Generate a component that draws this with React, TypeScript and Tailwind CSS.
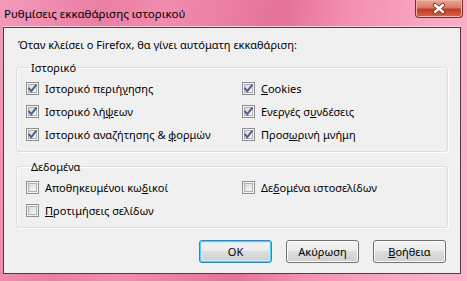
import type {ReactNode} from 'react';

// Win7-style "clear history" settings dialog

const FONT = {fontFamily: '"Noto Sans", "Open Sans", sans-serif'};

function CheckBox({checked}: {checked: boolean}) {
  return (
    <span className="relative flex h-[13px] w-[13px] shrink-0 items-center justify-center border border-[#8e8f8f] bg-[#f4f4f4]">
      <span className="absolute inset-[1px] border border-[#aeb0b2] bg-gradient-to-br from-[#d8d8d8] to-[#fafafa]" />
      {checked && (
        <svg viewBox="0 0 11 11" className="relative h-[11px] w-[11px]">
          <path
            d="M2.2 5.6 L4.3 8.2 L8.8 2.4"
            fill="none"
            stroke="#4c5d92"
            strokeWidth="1.9"
            strokeLinecap="square"
          />
        </svg>
      )}
    </span>
  );
}

function Option({checked, children}: {checked: boolean; children: ReactNode}) {
  return (
    <label className="flex h-[23px] items-center gap-[6px] text-[11px] leading-[15px] text-black">
      <CheckBox checked={checked} />
      <span>{children}</span>
    </label>
  );
}

function Group({title, children}: {title: string; children: ReactNode}) {
  return (
    <fieldset className="mx-[12px] rounded-[3px] border border-[#d5dfe5] pl-[9px] shadow-[inset_1px_1px_0_#fff,1px_1px_0_#fff]">
      <legend className="ml-[4px] px-[1px] text-[11px] leading-[15px] text-black">{title}</legend>
      <div className="grid grid-cols-[216px_1fr] pt-[2px] pb-[5px]">{children}</div>
    </fieldset>
  );
}

function Button({children, primary}: {children: ReactNode; primary?: boolean}) {
  return (
    <button
      type="button"
      className={`flex h-[23px] w-[73px] items-center justify-center rounded-[3px] border bg-[linear-gradient(#f2f2f2,#ebebeb_50%,#dddddd_50%,#cfcfcf)] text-[11px] leading-[15px] text-black ${
        primary
          ? 'border-[#3c7fb1] shadow-[inset_0_0_0_1px_#48d4fb,inset_0_0_0_2px_#c6effc]'
          : 'border-[#707070] shadow-[inset_0_0_0_1px_#fcfcfc]'
      }`}
    >
      {children}
    </button>
  );
}

export default function App() {
  return (
    <div
      style={FONT}
      className="relative flex h-[281px] w-[467px] flex-col overflow-hidden bg-[linear-gradient(100deg,#f39abb_0%,#ea7ea2_20%,#f28cae_32%,#e4729a_55%,#f48fb2_68%,#f9a8c3_85%,#fbb5cc_100%)]"
    >
      {/* Title bar */}
      <div className="flex h-[27px] shrink-0 items-center pl-[4px] text-[11.5px] text-black">
        Ρυθμίσεις εκκαθάρισης ιστορικού
      </div>
      <div
        aria-label="close"
        className="absolute top-0 left-[415px] flex h-[18px] w-[48px] items-center justify-center rounded-b-[4px] border border-t-0 border-[#7c2d25] bg-[linear-gradient(#eaa592,#d87a64_45%,#c13d26_55%,#d6644a)] shadow-[inset_0_0_0_1px_#f3b3a4]"
      >
        <svg viewBox="0 0 14 11" className="h-[11px] w-[14px]">
          <path d="M3 2 L11 9 M11 2 L3 9" stroke="#6e2a22" strokeWidth="4" strokeLinecap="round" />
          <path d="M3 2 L11 9 M11 2 L3 9" stroke="#fff" strokeWidth="2.4" strokeLinecap="round" />
        </svg>
      </div>

      {/* Client area */}
      <div className="ml-[3px] flex h-[247px] w-[458px] flex-col border border-[#5e3446] bg-[#f0f0f0] shadow-[0_-1px_0_#ffd3e2]">
        <p className="pt-[9px] pl-[14px] text-[11px] leading-[15px] text-black">
          Όταν κλείσει ο Firefox, θα γίνει αυτόματη εκκαθάριση:
        </p>

        <div className="mt-[8px]">
          <Group title="Ιστορικό">
            <Option checked>
              Ιστορικό περιή<u>γ</u>ησης
            </Option>
            <Option checked>
              <u>C</u>ookies
            </Option>
            <Option checked>
              Ιστορικό λή<u>ψ</u>εων
            </Option>
            <Option checked>
              Ενεργές σ<u>υ</u>νδέσεις
            </Option>
            <Option checked>
              Ιστορικό αναζήτησης &amp; <u>φ</u>ορμών
            </Option>
            <Option checked>
              Προσ<u>ω</u>ρινή μνήμη
            </Option>
          </Group>
        </div>

        <div className="mt-[7px]">
          <Group title="Δεδομένα">
            <Option checked={false}>
              Αποθηκευμένοι κω<u>δ</u>ικοί
            </Option>
            <Option checked={false}>
              Δε<u>δ</u>ομένα ιστοσελίδων
            </Option>
            <Option checked={false}>
              <u>Π</u>ροτιμήσεις σελίδων
            </Option>
          </Group>
        </div>

        <div className="mt-[12px] flex justify-end gap-[14px] pr-[14px]">
          <Button primary>OK</Button>
          <Button>Ακύρωση</Button>
          <Button>
            <u>Β</u>οήθεια
          </Button>
        </div>
      </div>
    </div>
  );
}
